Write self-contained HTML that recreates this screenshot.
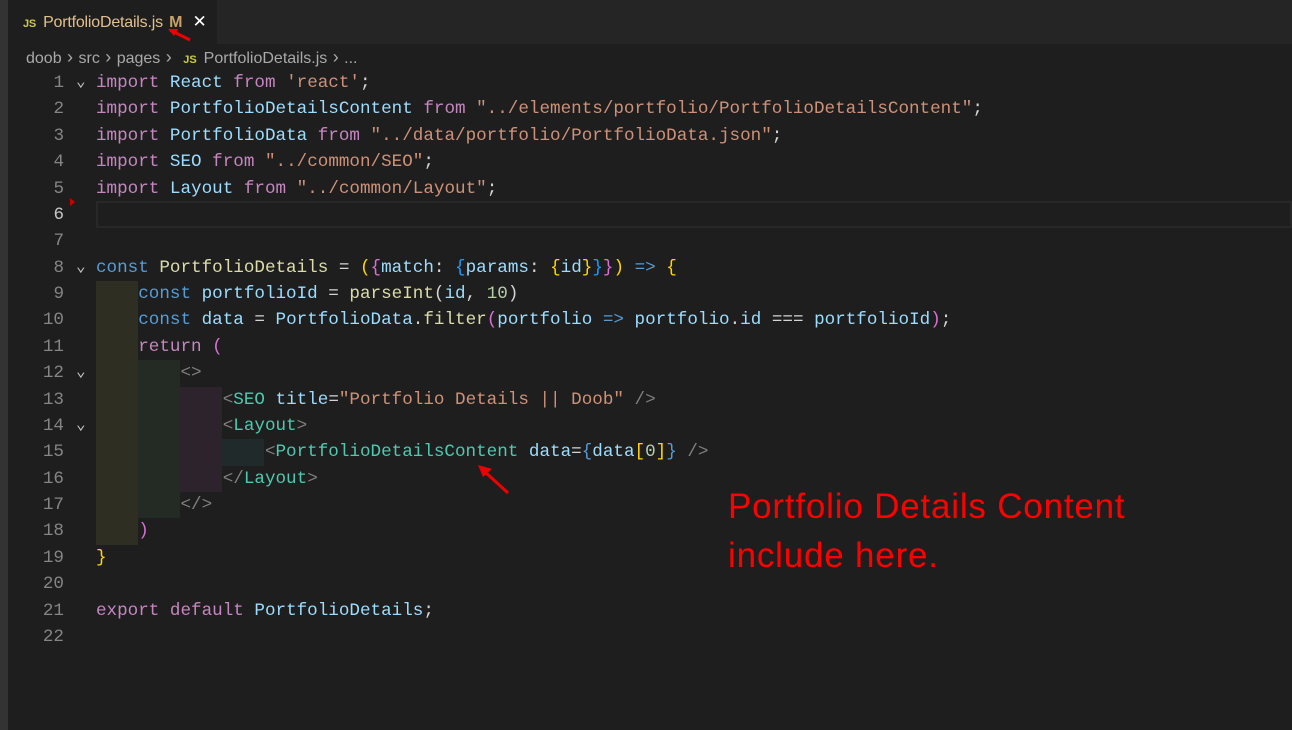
<!DOCTYPE html>
<html><head><meta charset="utf-8"><style>
*{margin:0;padding:0;box-sizing:border-box}
body{width:1292px;height:730px;background:#1e1e1e;overflow:hidden;position:relative;font-family:"Liberation Sans",sans-serif}
.strip{position:absolute;left:0;top:0;width:8px;height:730px;background:#333}
.tabbar{position:absolute;left:8px;top:0;width:1284px;height:44px;background:#252526}
.tab{position:absolute;left:8px;top:0;width:209px;height:44px;background:#1e1e1e;color:#e2c08d;font-size:16px;line-height:44px;padding-left:15px;letter-spacing:-0.2px}
.js{color:#cbcb41;font-weight:bold;font-size:11px;margin-right:7px}
.crumb{position:absolute;left:26px;top:47px;color:#a9a9a9;font-size:16px;line-height:20px;word-spacing:1px}
.code{position:absolute;left:0;top:70px;font-family:"Liberation Mono",monospace;font-size:17.6px;color:#d4d4d4}
.l{position:absolute;height:26.38px;line-height:26.38px;white-space:pre;left:96px}
.n{position:absolute;width:64px;text-align:right;left:0;color:#858585;height:26.38px;line-height:26.38px}
.ch{position:absolute;left:76px;color:#c5c5c5;font-size:16px;height:26.38px;line-height:24px}
.k{color:#c586c0}.v{color:#9cdcfe}.s{color:#ce9178}.b{color:#569cd6}.f{color:#dcdcaa}.t{color:#4ec9b0}.g{color:#808080}.y{color:#ffd700}.p{color:#da70d6}.c{color:#179fff}.num{color:#b5cea8}
.g1{position:absolute}
.red{position:absolute;left:728px;top:482px;color:#f00;font-size:35px;line-height:49px;letter-spacing:0.8px}
</style></head><body>
<div class="strip"></div>
<div class="tabbar"></div>
<div class="tab"><span class="js">JS</span>PortfolioDetails.js <span style="color:#c9a26a;font-weight:bold;margin-left:2px">M</span> <span style="color:#fff;margin-left:6px;font-size:17px">✕</span></div>
<svg style="position:absolute;left:168px;top:28px" width="30" height="16"><path d="M2 2 L22 12" stroke="#e00" stroke-width="3"/><path d="M0 1 L10 1 L6 8Z" fill="#e00"/></svg>
<div class="crumb">doob <span style="font-size:18px">›</span> src <span style="font-size:18px">›</span> pages <span style="font-size:18px">›</span> <span class="js" style="margin-left:6px">JS</span>PortfolioDetails.js <span style="font-size:18px">›</span> ...</div>
<div style="position:absolute;left:96px;top:201px;width:1196px;height:27px;border:2px solid #282828"></div>
<div style="position:absolute;left:70px;top:198px;width:0;height:0;border-top:4px solid transparent;border-bottom:4px solid transparent;border-left:5px solid #c00"></div>
<div class="g1" style="left:96px;top:281px;width:42px;height:264px;background:#2f2e22"></div>
<div class="g1" style="left:138px;top:360px;width:42px;height:158px;background:#232b24"></div>
<div class="g1" style="left:180px;top:387px;width:42px;height:105px;background:#2d232c"></div>
<div class="g1" style="left:222px;top:439px;width:42px;height:27px;background:#212a2a"></div>
<div class="code">
<div class="n" style="top:0">1</div><div class="ch" style="top:0">⌄</div><div class="l" style="top:0"><span class="k">import</span> <span class="v">React</span> <span class="k">from</span> <span class="s">'react'</span>;</div>
<div class="n" style="top:26.38px">2</div><div class="l" style="top:26.38px"><span class="k">import</span> <span class="v">PortfolioDetailsContent</span> <span class="k">from</span> <span class="s">"../elements/portfolio/PortfolioDetailsContent"</span>;</div>
<div class="n" style="top:52.76px">3</div><div class="l" style="top:52.76px"><span class="k">import</span> <span class="v">PortfolioData</span> <span class="k">from</span> <span class="s">"../data/portfolio/PortfolioData.json"</span>;</div>
<div class="n" style="top:79.14px">4</div><div class="l" style="top:79.14px"><span class="k">import</span> <span class="v">SEO</span> <span class="k">from</span> <span class="s">"../common/SEO"</span>;</div>
<div class="n" style="top:105.52px">5</div><div class="l" style="top:105.52px"><span class="k">import</span> <span class="v">Layout</span> <span class="k">from</span> <span class="s">"../common/Layout"</span>;</div>
<div class="n" style="top:131.9px;color:#c6c6c6">6</div>
<div class="n" style="top:158.28px">7</div>
<div class="n" style="top:184.66px">8</div><div class="ch" style="top:184.66px">⌄</div><div class="l" style="top:184.66px"><span class="b">const</span> <span class="f">PortfolioDetails</span> = <span class="y">(</span><span class="p">{</span><span class="v">match</span>: <span class="c">{</span><span class="v">params</span>: <span class="y">{</span><span class="v">id</span><span class="y">}</span><span class="c">}</span><span class="p">}</span><span class="y">)</span> <span class="b">=&gt;</span> <span class="y">{</span></div>
<div class="n" style="top:211.04px">9</div><div class="l" style="top:211.04px">    <span class="b">const</span> <span class="v">portfolioId</span> = <span class="f">parseInt</span>(<span class="v">id</span>, <span class="num">10</span>)</div>
<div class="n" style="top:237.42px">10</div><div class="l" style="top:237.42px">    <span class="b">const</span> <span class="v">data</span> = <span class="v">PortfolioData</span>.<span class="f">filter</span><span class="p">(</span><span class="v">portfolio</span> <span class="b">=&gt;</span> <span class="v">portfolio</span>.<span class="v">id</span> === <span class="v">portfolioId</span><span class="p">)</span>;</div>
<div class="n" style="top:263.8px">11</div><div class="l" style="top:263.8px">    <span class="k">return</span> <span class="p">(</span></div>
<div class="n" style="top:290.18px">12</div><div class="ch" style="top:290.18px">⌄</div><div class="l" style="top:290.18px">        <span class="g">&lt;&gt;</span></div>
<div class="n" style="top:316.56px">13</div><div class="l" style="top:316.56px">            <span class="g">&lt;</span><span class="t">SEO</span> <span class="v">title</span>=<span class="s">"Portfolio Details || Doob"</span> <span class="g">/&gt;</span></div>
<div class="n" style="top:342.94px">14</div><div class="ch" style="top:342.94px">⌄</div><div class="l" style="top:342.94px">            <span class="g">&lt;</span><span class="t">Layout</span><span class="g">&gt;</span></div>
<div class="n" style="top:369.32px">15</div><div class="l" style="top:369.32px">                <span class="g">&lt;</span><span class="t">PortfolioDetailsContent</span> <span class="v">data</span>=<span class="b">{</span><span class="v">data</span><span class="y">[</span><span class="num">0</span><span class="y">]</span><span class="b">}</span> <span class="g">/&gt;</span></div>
<div class="n" style="top:395.7px">16</div><div class="l" style="top:395.7px">            <span class="g">&lt;/</span><span class="t">Layout</span><span class="g">&gt;</span></div>
<div class="n" style="top:422.08px">17</div><div class="l" style="top:422.08px">        <span class="g">&lt;/&gt;</span></div>
<div class="n" style="top:448.46px">18</div><div class="l" style="top:448.46px">    <span class="p">)</span></div>
<div class="n" style="top:474.84px">19</div><div class="l" style="top:474.84px"><span class="y">}</span></div>
<div class="n" style="top:501.22px">20</div>
<div class="n" style="top:527.6px">21</div><div class="l" style="top:527.6px"><span class="k">export</span> <span class="k">default</span> <span class="v">PortfolioDetails</span>;</div>
<div class="n" style="top:553.98px">22</div>
</div>
<svg style="position:absolute;left:476px;top:463px" width="40" height="34"><path d="M32 30 L8 8" stroke="#e00" stroke-width="3"/><path d="M2 2 L16 6 L7 14Z" fill="#e00"/></svg>
<div class="red">Portfolio Details Content<br>include here.</div>
</body></html>
